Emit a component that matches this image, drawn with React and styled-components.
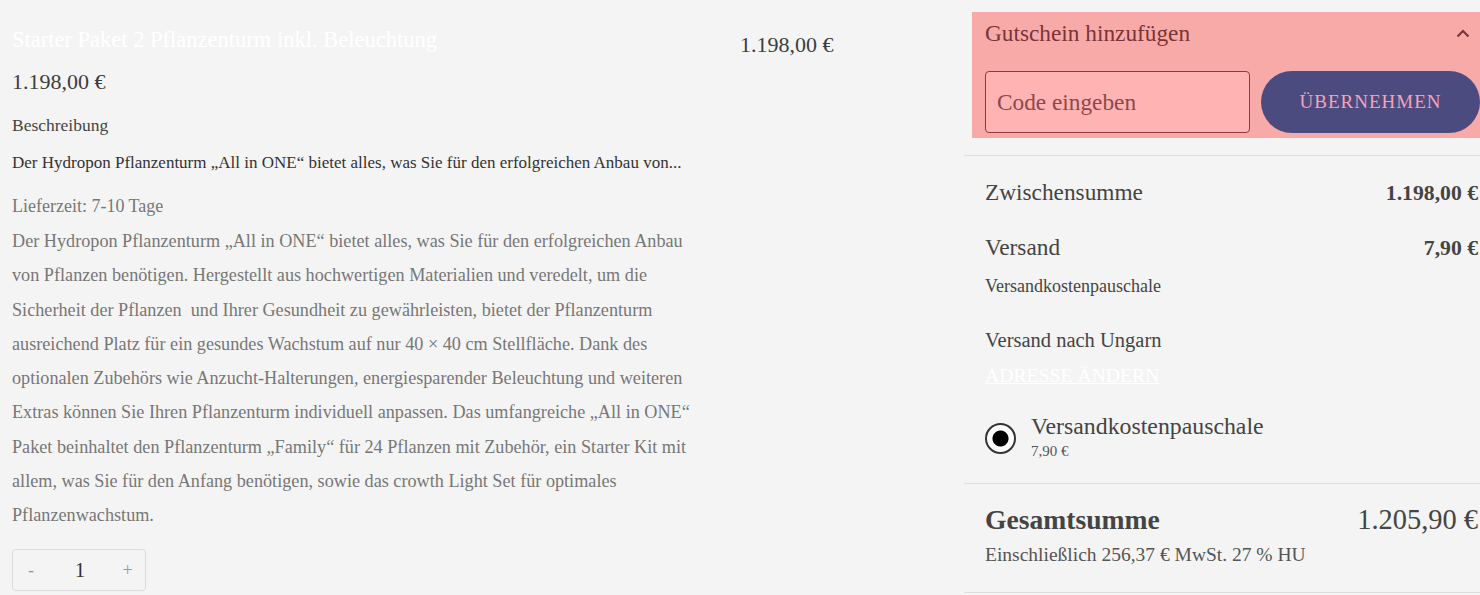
import React, { useState } from "react";
import styled, { createGlobalStyle } from "styled-components";

const GlobalStyle = createGlobalStyle`
  *, *::before, *::after {
    box-sizing: border-box;
  }
  html, body {
    margin: 0;
    padding: 0;
    background: #f4f4f4;
  }
  body {
    font-family: "Liberation Serif", "DejaVu Serif", serif;
    color: #444;
    overflow: hidden;
  }
`;

const DESCRIPTION_LINES = [
  "Der Hydropon Pflanzenturm „All in ONE“ bietet alles, was Sie für den erfolgreichen Anbau",
  "von Pflanzen benötigen. Hergestellt aus hochwertigen Materialien und veredelt, um die",
  "Sicherheit der Pflanzen  und Ihrer Gesundheit zu gewährleisten, bietet der Pflanzenturm",
  "ausreichend Platz für ein gesundes Wachstum auf nur 40 × 40 cm Stellfläche. Dank des",
  "optionalen Zubehörs wie Anzucht-Halterungen, energiesparender Beleuchtung und weiteren",
  "Extras können Sie Ihren Pflanzenturm individuell anpassen. Das umfangreiche „All in ONE“",
  "Paket beinhaltet den Pflanzenturm „Family“ für 24 Pflanzen mit Zubehör, ein Starter Kit mit",
  "allem, was Sie für den Anfang benötigen, sowie das crowth Light Set für optimales",
  "Pflanzenwachstum.",
];

const App = () => {
  const [quantity, setQuantity] = useState(1);
  const [coupon, setCoupon] = useState("");

  return (
    <>
      <GlobalStyle />
      <Page>
        <ProductColumn>
          <Title>Starter Paket 2 Pflanzenturm inkl. Beleuchtung</Title>
          <Price>1.198,00 €</Price>
          <SectionLabel>Beschreibung</SectionLabel>
          <ShortText>
            Der Hydropon Pflanzenturm „All in ONE“ bietet alles, was Sie für den
            erfolgreichen Anbau von...
          </ShortText>
          <Delivery>Lieferzeit: 7-10 Tage</Delivery>
          <Description>
            {DESCRIPTION_LINES.map((line, i) => (
              <DescriptionLine key={i}>{line}</DescriptionLine>
            ))}
          </Description>
          <Quantity>
            <QtyButton onClick={() => setQuantity(q => Math.max(1, q - 1))}>
              -
            </QtyButton>
            <QtyValue>{quantity}</QtyValue>
            <QtyButton onClick={() => setQuantity(q => q + 1)}>+</QtyButton>
          </Quantity>
        </ProductColumn>

        <LineTotalColumn>
          <LineTotal>1.198,00 €</LineTotal>
        </LineTotalColumn>

        <SummaryColumn>
          <CouponPanel>
            <CouponHeader>
              <CouponTitle>Gutschein hinzufügen</CouponTitle>
              <svg width="14" height="9" viewBox="0 0 14 9">
                <path
                  d="M1.5 7.5 L7 2 L12.5 7.5"
                  fill="none"
                  stroke="#7a3436"
                  strokeWidth="2"
                />
              </svg>
            </CouponHeader>
            <CouponRow>
              <CouponInput
                placeholder="Code eingeben"
                value={coupon}
                onChange={event => setCoupon(event.target.value)}
              />
              <ApplyButton type="button">ÜBERNEHMEN</ApplyButton>
            </CouponRow>
          </CouponPanel>

          <Totals>
            <SumRow>
              <SumLabel>Zwischensumme</SumLabel>
              <SumValue>1.198,00 €</SumValue>
            </SumRow>
            <SumRow $gap={26}>
              <SumLabel>Versand</SumLabel>
              <SumValue>7,90 €</SumValue>
            </SumRow>
            <SmallNote>Versandkostenpauschale</SmallNote>
            <Destination>Versand nach Ungarn</Destination>
            <ChangeAddress href="#">ADRESSE ÄNDERN</ChangeAddress>
            <ShippingOption>
              <Radio />
              <OptionText>
                <OptionName>Versandkostenpauschale</OptionName>
                <OptionPrice>7,90 €</OptionPrice>
              </OptionText>
            </ShippingOption>
          </Totals>

          <GrandTotal>
            <GrandRow>
              <GrandLabel>Gesamtsumme</GrandLabel>
              <GrandValue>1.205,90 €</GrandValue>
            </GrandRow>
            <TaxNote>Einschließlich 256,37 € MwSt. 27 % HU</TaxNote>
          </GrandTotal>
        </SummaryColumn>
      </Page>
    </>
  );
};

export default App;

const Page = styled.div`
  display: flex;
  width: 1480px;
  height: 595px;
`;

const ProductColumn = styled.div`
  flex: 0 0 728px;
  padding: 26px 0 0 12px;
`;

const Title = styled.h1`
  margin: 0;
  font-size: 22.5px;
  font-weight: 400;
  line-height: 28px;
  color: #ffffff;
`;

const Price = styled.div`
  margin-top: 14px;
  font-size: 22px;
  line-height: 28px;
  color: #3d3d3d;
`;

const SectionLabel = styled.div`
  margin-top: 19px;
  font-size: 17.5px;
  line-height: 20px;
  color: #444;
`;

const ShortText = styled.p`
  margin: 18px 0 0;
  font-size: 17px;
  line-height: 20px;
  color: #333;
  white-space: nowrap;
`;

const Delivery = styled.div`
  margin-top: 21px;
  font-size: 18px;
  line-height: 24px;
  color: #777;
`;

const Description = styled.div`
  margin-top: 6px;
  font-size: 18.2px;
  line-height: 34.25px;
  color: #777;
`;

const DescriptionLine = styled.div`
  white-space: pre;
`;

const Quantity = styled.div`
  display: grid;
  grid-template-columns: 36px 62px 33px;
  align-items: center;
  width: 134px;
  height: 42px;
  margin-top: 17px;
  border: 1px solid #dcdcdc;
  border-radius: 4px;
`;

const QtyButton = styled.button`
  border: none;
  background: none;
  padding: 0;
  font-family: inherit;
  font-size: 18px;
  color: #999;
  cursor: pointer;
`;

const QtyValue = styled.span`
  text-align: center;
  font-size: 21px;
  color: #333;
`;

const LineTotalColumn = styled.div`
  flex: 0 0 236px;
  padding-top: 31px;
  padding-left: 12px;
`;

const LineTotal = styled.div`
  font-size: 22px;
  line-height: 28px;
  color: #3d3d3d;
`;

const SummaryColumn = styled.div`
  flex: 0 0 516px;
  display: flex;
  flex-direction: column;
`;

const CouponPanel = styled.div`
  margin: 12px 0 0 8px;
  padding: 9px 0 5px 13px;
  background: #f8aaa9;
`;

const CouponHeader = styled.div`
  display: flex;
  align-items: center;
  justify-content: space-between;
  height: 24px;
  padding-right: 10px;
  margin-bottom: 26px;
`;

const CouponTitle = styled.span`
  font-size: 23.3px;
  color: #7a3436;
`;

const CouponRow = styled.div`
  display: flex;
  gap: 11px;
  height: 62px;
`;

const CouponInput = styled.input`
  width: 265px;
  height: 62px;
  padding: 0 11px;
  border: 1.5px solid #8a3b3d;
  border-radius: 4px;
  background: #ffb3b3;
  font-family: inherit;
  font-size: 23.3px;
  color: #7a3436;
  outline: none;

  &::placeholder {
    color: #8a4a4c;
  }
`;

const ApplyButton = styled.button`
  flex: 1;
  border: none;
  border-radius: 31px;
  background: #4b4b80;
  font-family: inherit;
  font-size: 19px;
  letter-spacing: 1px;
  color: #f4a3b8;
  cursor: pointer;
`;

const Totals = styled.div`
  margin-top: 17px;
  padding: 22px 2px 20px 21px;
  border-top: 1px solid #dedede;
  border-bottom: 1px solid #dedede;
`;

const SumRow = styled.div`
  display: flex;
  justify-content: space-between;
  align-items: baseline;
  margin-top: ${({ $gap }) => $gap || 0}px;
  line-height: 28px;
`;

const SumLabel = styled.span`
  font-size: 23.3px;
  color: #444;
`;

const SumValue = styled.span`
  font-size: 21.7px;
  font-weight: 700;
  color: #444;
`;

const SmallNote = styled.div`
  margin-top: 14px;
  font-size: 18px;
  line-height: 20px;
  color: #444;
`;

const Destination = styled.div`
  margin-top: 32px;
  font-size: 20.5px;
  line-height: 24px;
  color: #444;
`;

const ChangeAddress = styled.a`
  display: inline-block;
  margin-top: 11px;
  font-size: 19.7px;
  line-height: 24px;
  color: #ffffff;
  text-decoration: underline;
`;

const ShippingOption = styled.label`
  display: flex;
  align-items: center;
  gap: 15px;
  margin-top: 26px;
`;

const Radio = styled.span`
  width: 31px;
  height: 31px;
  flex-shrink: 0;
  border: 2px solid #333;
  border-radius: 50%;
  background: radial-gradient(circle, #000 0 7.5px, #fff 8.5px);
`;

const OptionText = styled.div`
  display: flex;
  flex-direction: column;
`;

const OptionName = styled.span`
  font-size: 23.8px;
  line-height: 26px;
  color: #444;
`;

const OptionPrice = styled.span`
  font-size: 15px;
  line-height: 24px;
  color: #555;
`;

const GrandTotal = styled.div`
  padding: 21px 2px 25px 21px;
  border-bottom: 1px solid #dedede;
`;

const GrandRow = styled.div`
  display: flex;
  justify-content: space-between;
  align-items: baseline;
  line-height: 30px;
`;

const GrandLabel = styled.span`
  font-size: 27.6px;
  font-weight: 700;
  color: #444;
`;

const GrandValue = styled.span`
  font-size: 28.4px;
  color: #444;
`;

const TaxNote = styled.div`
  margin-top: 8px;
  font-size: 19.5px;
  line-height: 24px;
  color: #555;
`;
